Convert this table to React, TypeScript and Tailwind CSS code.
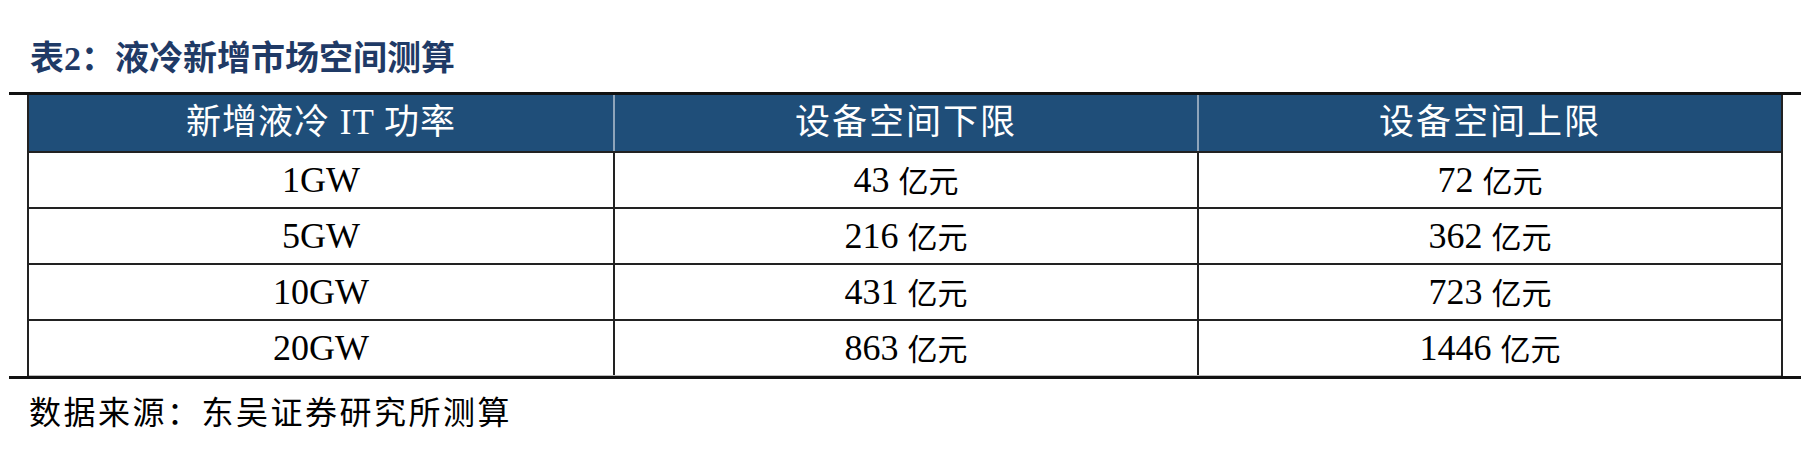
import React from 'react';

const rows = [
  ['1GW', '43', '72'],
  ['5GW', '216', '362'],
  ['10GW', '431', '723'],
  ['20GW', '863', '1446'],
];

const cjkSerif = 'font-["Liberation_Serif","Noto_Sans_CJK_SC",serif]';

const Amount: React.FC<{ value: string }> = ({ value }) => (
  <span>
    {value}
    <span className="ml-[9px] font-['Noto_Sans_CJK_SC',sans-serif] text-[30px]">亿元</span>
  </span>
);

const App: React.FC = () => {
  return (
    <div className="w-[1801px] h-[462px] bg-white overflow-hidden">
      <div className="h-[92px] pt-[42px] pl-[30px] leading-[34px] text-[34px] font-bold text-[#1f3a66] font-['Liberation_Serif','Noto_Sans_CJK_SC',serif]">
        表2：液冷新增市场空间测算
      </div>

      <div className="ml-[9px] w-[1792px] h-[3px] bg-[#111]" />

      <div className="ml-[27px] w-[1756px] border-x-2 border-[#222]">
        <div className={`grid grid-cols-3 h-[56px] bg-[#1f4e79] text-white text-[35px] ${cjkSerif}`}>
          <div className="flex items-center justify-center tracking-[1px]">新增液冷 IT 功率</div>
          <div className="flex items-center justify-center tracking-[2px] border-l-2 border-[#8ea4ba]">设备空间下限</div>
          <div className="flex items-center justify-center tracking-[2px] border-l-2 border-[#8ea4ba]">设备空间上限</div>
        </div>

        {rows.map(([power, low, high]) => (
          <div
            key={power}
            className={`grid grid-cols-3 h-[56px] border-t-2 border-[#222] text-[36px] text-black ${cjkSerif}`}
          >
            <div className="flex items-center justify-center">{power}</div>
            <div className="flex items-center justify-center border-l-2 border-[#222]">
              <Amount value={low} />
            </div>
            <div className="flex items-center justify-center border-l-2 border-[#222]">
              <Amount value={high} />
            </div>
          </div>
        ))}
        <div className="h-px bg-[#bbb]" />
      </div>

      <div className="ml-[9px] w-[1792px] h-[3px] bg-[#111]" />

      <div className="mt-[14px] pl-[29px] leading-[34px] text-[32px] tracking-[2.5px] text-black font-['Noto_Sans_CJK_SC',sans-serif]">
        数据来源：东吴证券研究所测算
      </div>
    </div>
  );
};

export default App;
